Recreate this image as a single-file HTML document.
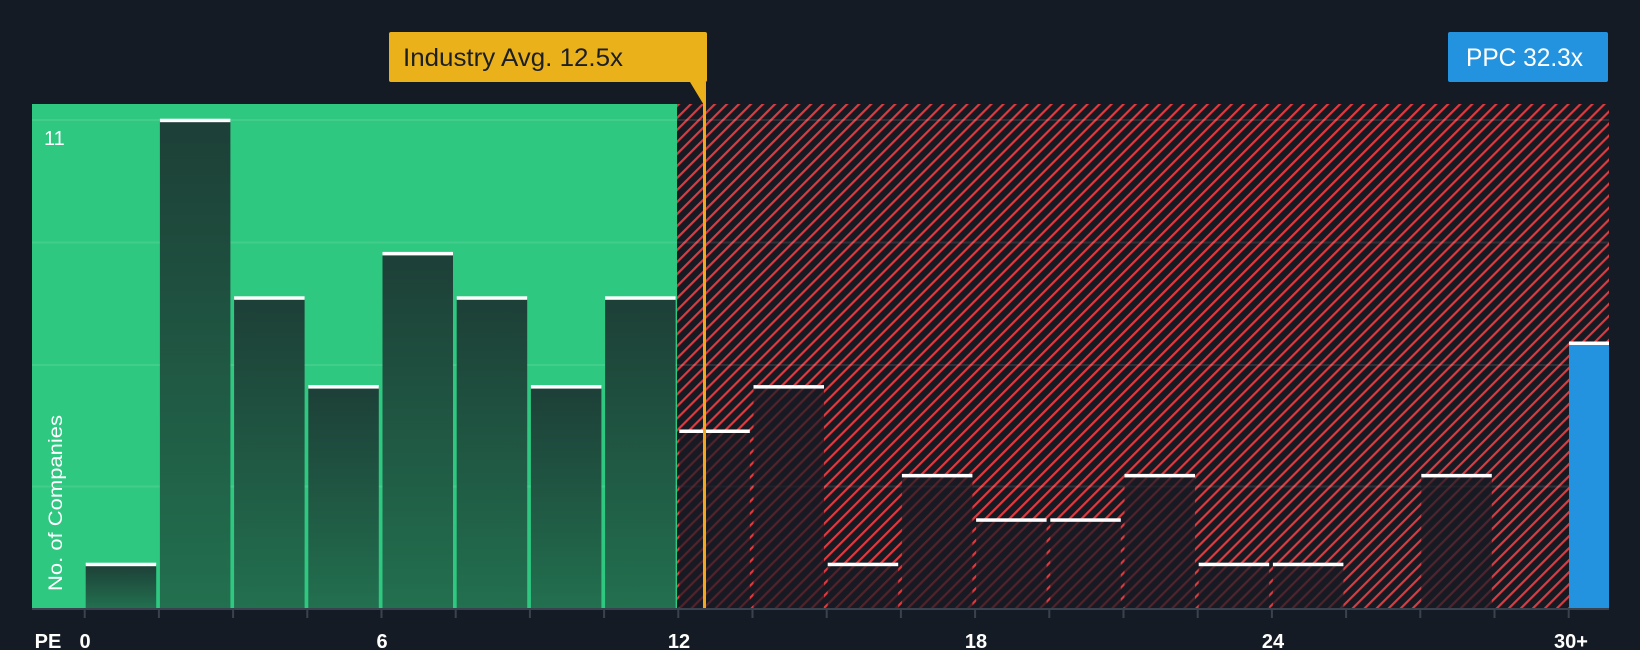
<!DOCTYPE html>
<html><head><meta charset="utf-8"><style>
html,body{margin:0;padding:0;background:#151b24;}
svg{display:block;}
text{font-family:"Liberation Sans Narrow","Liberation Sans",sans-serif;}
</style></head><body>
<svg width="1640" height="650" viewBox="0 0 1640 650" xmlns="http://www.w3.org/2000/svg">
<defs>
<pattern id="h" patternUnits="userSpaceOnUse" width="8.5" height="8.5" patternTransform="rotate(45)">
<rect width="8.5" height="8.5" fill="#161a23"/>
<rect x="0" y="0" width="2.2" height="8.5" fill="#e0393e"/>
</pattern>
<linearGradient id="g" x1="0" y1="0" x2="0" y2="1">
<stop offset="0" stop-color="#1d3f37"/><stop offset="1" stop-color="#22704f"/>
</linearGradient>
</defs>
<rect x="32" y="104" width="645" height="505" fill="#2ec880"/>
<rect x="677" y="104" width="932" height="505" fill="url(#h)"/>
<g stroke="rgba(255,255,255,0.1)" stroke-width="2">
<line x1="32" y1="120" x2="1609" y2="120"/>
<line x1="32" y1="242.5" x2="1609" y2="242.5"/>
<line x1="32" y1="365" x2="1609" y2="365"/>
<line x1="32" y1="486.5" x2="1609" y2="486.5"/>
</g>
<g fill="url(#g)">
<rect x="85.7" y="564.2" width="70.5" height="44.4"/>
<rect x="159.9" y="120.2" width="70.5" height="488.4"/>
<rect x="234.1" y="297.8" width="70.5" height="310.8"/>
<rect x="308.3" y="386.6" width="70.5" height="222"/>
<rect x="382.5" y="253.4" width="70.5" height="355.2"/>
<rect x="456.7" y="297.8" width="70.5" height="310.8"/>
<rect x="530.9" y="386.6" width="70.5" height="222"/>
<rect x="605.1" y="297.8" width="70.5" height="310.8"/>
</g>
<g fill="rgba(25,27,36,0.72)">
<rect x="679.3" y="431" width="70.5" height="177.6"/>
<rect x="753.5" y="386.6" width="70.5" height="222"/>
<rect x="827.7" y="564.2" width="70.5" height="44.4"/>
<rect x="901.9" y="475.4" width="70.5" height="133.2"/>
<rect x="976.1" y="519.8" width="70.5" height="88.8"/>
<rect x="1050.3" y="519.8" width="70.5" height="88.8"/>
<rect x="1124.5" y="475.4" width="70.5" height="133.2"/>
<rect x="1198.7" y="564.2" width="70.5" height="44.4"/>
<rect x="1272.9" y="564.2" width="70.5" height="44.4"/>
<rect x="1421.3" y="475.4" width="70.5" height="133.2"/>
</g>
<rect x="1569" y="342" width="40" height="267" fill="#2393e0"/>
<g fill="#ffffff">
<rect x="85.7" y="562.7" width="70.5" height="3.5"/>
<rect x="159.9" y="118.7" width="70.5" height="3.5"/>
<rect x="234.1" y="296.3" width="70.5" height="3.5"/>
<rect x="308.3" y="385.1" width="70.5" height="3.5"/>
<rect x="382.5" y="251.9" width="70.5" height="3.5"/>
<rect x="456.7" y="296.3" width="70.5" height="3.5"/>
<rect x="530.9" y="385.1" width="70.5" height="3.5"/>
<rect x="605.1" y="296.3" width="70.5" height="3.5"/>
<rect x="679.3" y="429.5" width="70.5" height="3.5"/>
<rect x="753.5" y="385.1" width="70.5" height="3.5"/>
<rect x="827.7" y="562.7" width="70.5" height="3.5"/>
<rect x="901.9" y="473.9" width="70.5" height="3.5"/>
<rect x="976.1" y="518.3" width="70.5" height="3.5"/>
<rect x="1050.3" y="518.3" width="70.5" height="3.5"/>
<rect x="1124.5" y="473.9" width="70.5" height="3.5"/>
<rect x="1198.7" y="562.7" width="70.5" height="3.5"/>
<rect x="1272.9" y="562.7" width="70.5" height="3.5"/>
<rect x="1421.3" y="473.9" width="70.5" height="3.5"/>
<rect x="1569" y="341.5" width="40" height="3.5"/>
</g>
<line x1="704.5" y1="82" x2="704.5" y2="609" stroke="#f0a81c" stroke-width="3"/>
<path d="M690 82 L704.5 82 L704.5 106 Z" fill="#ebb11a"/>
<rect x="389" y="32" width="318" height="50" rx="2" fill="#ebb11a"/>
<text x="403" y="66" font-size="25" fill="#1b1f26" textLength="220" lengthAdjust="spacingAndGlyphs">Industry Avg. 12.5x</text>
<rect x="1448" y="32" width="160" height="50" rx="2" fill="#2393e0"/>
<text x="1466" y="66" font-size="25" fill="#ffffff" textLength="117" lengthAdjust="spacingAndGlyphs">PPC 32.3x</text>
<line x1="32" y1="609" x2="1609" y2="609" stroke="#3a4250" stroke-width="2"/>
<path stroke="#3a4250" stroke-width="2" d="M84.7 609v9M158.9 609v9M233.1 609v9M307.3 609v9M381.5 609v9M455.7 609v9M529.9 609v9M604.1 609v9M678.3 609v9M752.5 609v9M826.7 609v9M900.9 609v9M975.1 609v9M1049.3 609v9M1123.5 609v9M1197.7 609v9M1271.9 609v9M1346.1 609v9M1420.3 609v9M1494.5 609v9M1568.7 609v9"/>
<text x="44" y="145" font-size="20" fill="#ffffff">11</text>
<text transform="translate(62,591) rotate(-90)" font-size="19" fill="#ffffff" font-family="Liberation Sans,sans-serif" textLength="176" lengthAdjust="spacingAndGlyphs">No. of Companies</text>
<g font-size="20" font-weight="bold" fill="#ffffff" text-anchor="middle">
<text x="48" y="648">PE</text>
<text x="85" y="648">0</text>
<text x="382" y="648">6</text>
<text x="679" y="648">12</text>
<text x="976" y="648">18</text>
<text x="1273" y="648">24</text>
<text x="1571" y="648">30+</text>
</g>
</svg>
</body></html>
